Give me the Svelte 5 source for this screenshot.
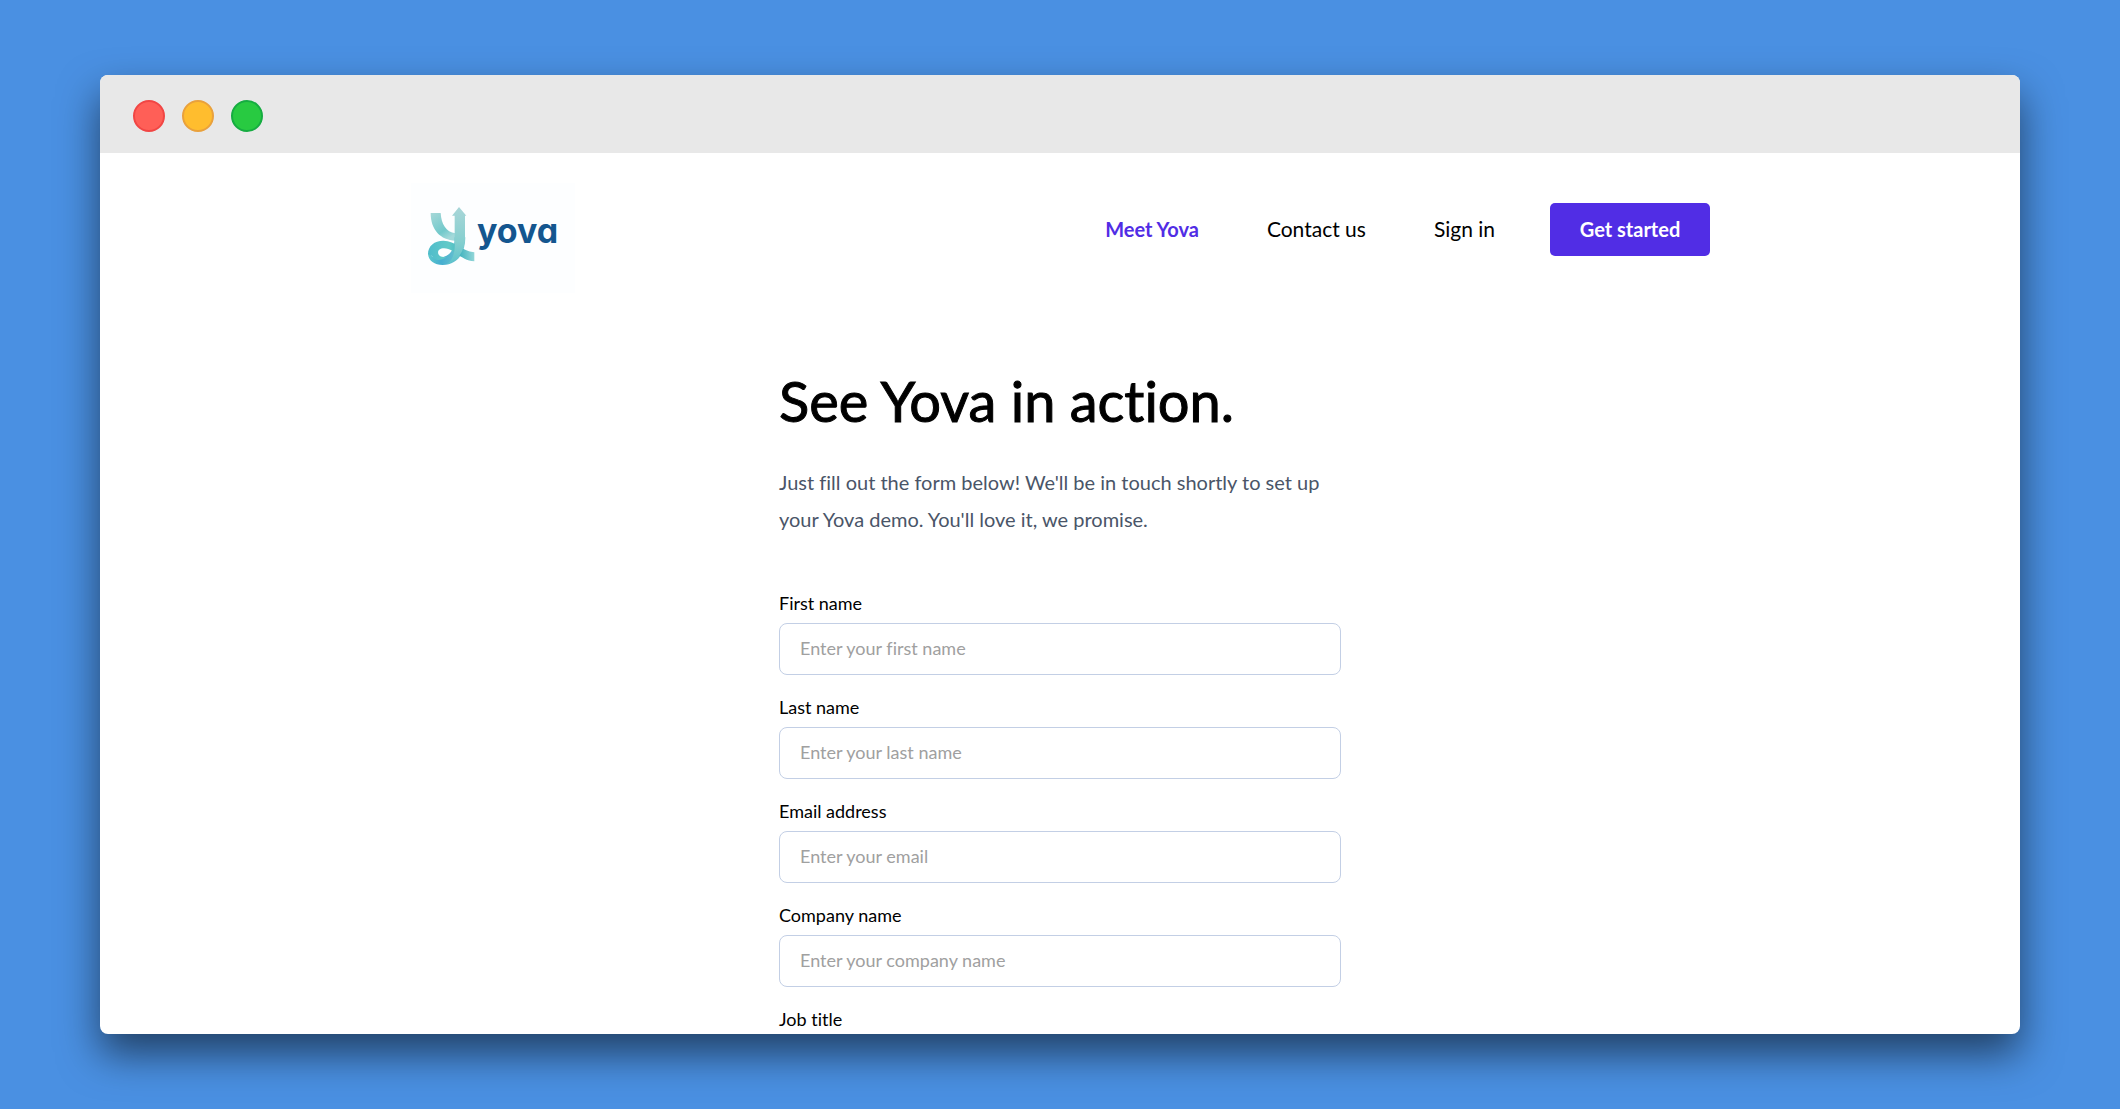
<script>
	const links = [
		{ label: 'Meet Yova', active: true },
		{ label: 'Contact us', active: false },
		{ label: 'Sign in', active: false }
	];

	const fields = [
		{ id: 'first-name', label: 'First name', type: 'text', placeholder: 'Enter your first name' },
		{ id: 'last-name', label: 'Last name', type: 'text', placeholder: 'Enter your last name' },
		{ id: 'email', label: 'Email address', type: 'email', placeholder: 'Enter your email' },
		{ id: 'company', label: 'Company name', type: 'text', placeholder: 'Enter your company name' },
		{ id: 'job-title', label: 'Job title', type: 'text', placeholder: 'Enter your job title' }
	];
</script>

<div class="backdrop">
	<div class="window">
		<div class="titlebar">
			<span class="dot red"></span>
			<span class="dot yellow"></span>
			<span class="dot green"></span>
		</div>

		<div class="page">
			<header>
				<a class="logo" href="/" aria-label="Yova home">
					<svg viewBox="33 9 492 330">
						<defs>
							<linearGradient id="arm" x1="0" y1="0" x2="0.6" y2="1">
								<stop offset="0" stop-color="#a6d8d8" />
								<stop offset="0.7" stop-color="#72c9cb" />
								<stop offset="1" stop-color="#a3d9da" />
							</linearGradient>
							<linearGradient id="stem" x1="0" y1="0" x2="0" y2="1">
								<stop offset="0" stop-color="#a9d6d8" />
								<stop offset="0.6" stop-color="#86cfcf" />
								<stop offset="1" stop-color="#5cc3cb" />
							</linearGradient>
							<linearGradient id="tail" x1="0" y1="0" x2="1" y2="0">
								<stop offset="0" stop-color="#4fbccb" />
								<stop offset="0.45" stop-color="#62cac8" />
								<stop offset="0.7" stop-color="#46b5c0" />
								<stop offset="1" stop-color="#92d6d8" />
							</linearGradient>
							<linearGradient id="loop" x1="0" y1="0" x2="1" y2="0">
								<stop offset="0" stop-color="#5cc8cc" />
								<stop offset="0.35" stop-color="#45aed0" />
								<stop offset="1" stop-color="#7acbcf" />
							</linearGradient>
						</defs>
						<rect x="33" y="9" width="492" height="330" fill="#fdfeff" />
						<path fill="url(#arm)" d="M92 99H122C124 132 138 156 166 160V182C122 180 92 150 92 99Z" />
						<path fill="url(#loop)" d="M92 222C98 238 112 236 130 231C154 224 164 205 164 172H196C196 222 170 255 128 255C103 255 84 241 84 220Z" />
						<path fill="url(#tail)" d="M84 222C84 198 103 182 130 182C168 182 184 213 223 217V244C181 241 163 206 132 205C118 205 112 213 115 222C118 230 128 233 140 230C122 244 102 243 96 228Z" />
						<path fill="url(#stem)" d="M156 107L177 81L199 107H195V172C195 212 174 245 140 253C160 240 166 215 164 180V107Z" />
					</svg>
					<span class="wordmark">yova</span>
				</a>

				<nav>
					{#each links as link}
						<a class="link" class:active={link.active} href="/">{link.label}</a>
					{/each}
					<button class="cta" type="button">Get started</button>
				</nav>
			</header>

			<main>
				<h1>See Yova in action.</h1>
				<p class="intro">
					Just fill out the form below! We'll be in touch shortly to set up your Yova demo. You'll love
					it, we promise.
				</p>

				<form>
					{#each fields as field}
						<div class="field">
							<label for={field.id}>{field.label}</label>
							<input id={field.id} type={field.type} placeholder={field.placeholder} />
						</div>
					{/each}
				</form>
			</main>
		</div>
	</div>
</div>

<style>
	:global(body) {
		margin: 0;
		background: #4a90e2;
	}

	.backdrop {
		box-sizing: border-box;
		height: 100vh;
		padding: 75px 100px;
		overflow: hidden;
		font-family: Lato, 'Liberation Sans', sans-serif;
		font-variant-ligatures: none;
		color: #000;
	}

	.window {
		display: flex;
		flex-direction: column;
		height: 100%;
		border-radius: 8px;
		overflow: hidden;
		background: #fff;
		box-shadow: 0 20px 40px rgba(0, 0, 0, 0.55);
	}

	.titlebar {
		flex: none;
		display: flex;
		align-items: center;
		gap: 17px;
		height: 78px;
		padding: 4px 33px 0;
		box-sizing: border-box;
		background: #e8e8e8;
	}

	.dot {
		box-sizing: border-box;
		width: 32px;
		height: 32px;
		border: 2px solid;
		border-radius: 50%;
	}

	.red {
		background: #ff5f57;
		border-color: #f14644;
	}

	.yellow {
		background: #ffbd2e;
		border-color: #e9a13c;
	}

	.green {
		background: #28ca41;
		border-color: #16ac41;
	}

	.page {
		flex: 1;
		min-height: 0;
		overflow: hidden;
	}

	header {
		box-sizing: border-box;
		display: flex;
		justify-content: space-between;
		align-items: flex-start;
		max-width: 1300px;
		margin: 0 auto;
		padding: 30px 0 0 1px;
	}

	.logo {
		display: grid;
		text-decoration: none;
	}

	.logo svg,
	.wordmark {
		grid-area: 1 / 1;
	}

	.logo svg {
		display: block;
		width: 164px;
	}

	.wordmark {
		padding: 28px 0 0 66px;
		font-family: Inter, Lato, sans-serif;
		font-size: 34px;
		font-weight: 700;
		line-height: 40px;
		font-feature-settings: 'cv11';
		color: #14568f;
	}

	nav {
		display: flex;
		align-items: center;
		gap: 68px;
		margin-top: 20px;
	}

	.link {
		padding-bottom: 2px;
		font-size: 21px;
		color: #000;
		text-decoration: none;
	}

	.link.active {
		font-size: 20px;
		font-weight: 700;
		color: #512de5;
	}

	.cta {
		min-width: 160px;
		height: 53px;
		margin-left: -13px;
		padding: 0 28px 2px;
		border: none;
		border-radius: 5px;
		background: #512de5;
		font: inherit;
		font-size: 20px;
		font-weight: 700;
		color: #fff;
	}

	main {
		max-width: 562px;
		margin: 0 auto;
		padding-top: 75px;
	}

	h1 {
		margin: 0 0 30px;
		font-size: 56px;
		font-weight: 400;
		line-height: 66px;
		-webkit-text-stroke: 1px currentColor;
	}

	.intro {
		margin: 0 0 52px;
		font-size: 20px;
		line-height: 37px;
		color: #4a5568;
	}

	form {
		display: flex;
		flex-direction: column;
		gap: 19px;
	}

	.field {
		display: flex;
		flex-direction: column;
		gap: 7px;
	}

	label {
		font-size: 18px;
		line-height: 26px;
	}

	input {
		box-sizing: border-box;
		width: 100%;
		height: 52px;
		padding: 0 20px 2px;
		border: 1px solid #c3cfe5;
		border-radius: 8px;
		background: #fff;
		font: inherit;
		font-size: 18px;
		color: #000;
	}

	input::placeholder {
		color: #a0a0a0;
	}
</style>
